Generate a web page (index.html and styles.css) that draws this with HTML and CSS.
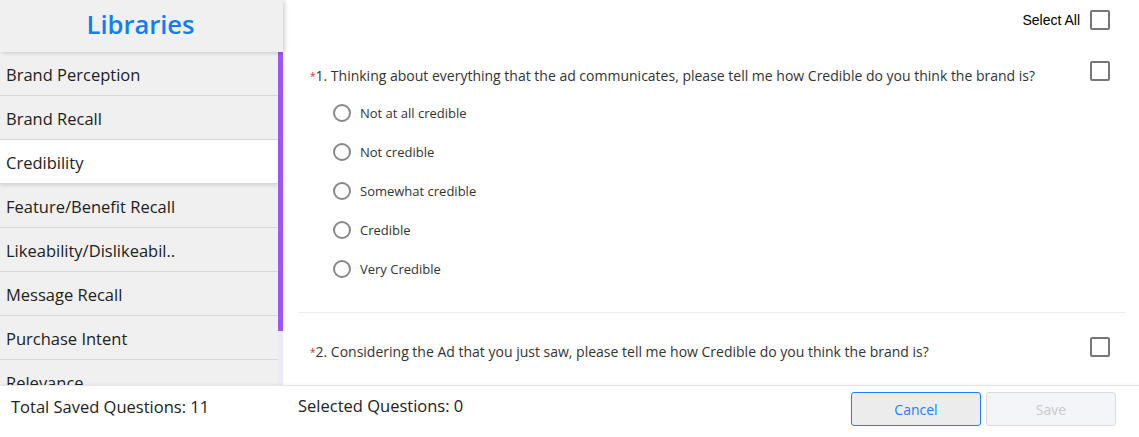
FILE: index.html
```html
<!DOCTYPE html>
<html lang="en">
<head>
    <meta charset="UTF-8">
    <title>Libraries</title>
    <link rel="stylesheet" href="styles.css">
</head>
<body>

<div class="page">
    <div class="top">
        <aside class="sidebar">
            <div class="side-head">Libraries</div>
            <div class="side-body">
                <ul class="lib-list">
                    <li>Brand Perception</li>
                    <li>Brand Recall</li>
                    <li class="active">Credibility</li>
                    <li>Feature/Benefit Recall</li>
                    <li>Likeability/Dislikeabil..</li>
                    <li>Message Recall</li>
                    <li>Purchase Intent</li>
                    <li>Relevance</li>
                </ul>
                <div class="scroll-track"><div class="scroll-thumb"></div></div>
            </div>
        </aside>

        <main class="main">
            <div class="select-all">
                <span>Select All</span>
                <span class="check"></span>
            </div>

            <div class="question">
                <div class="q-head">
                    <p class="q-text"><span class="req">*</span>1. Thinking about everything that the ad communicates, please tell me how Credible do you think the brand is?</p>
                    <span class="check"></span>
                </div>
                <ul class="options">
                    <li><span class="radio"></span>Not at all credible</li>
                    <li><span class="radio"></span>Not credible</li>
                    <li><span class="radio"></span>Somewhat credible</li>
                    <li><span class="radio"></span>Credible</li>
                    <li><span class="radio"></span>Very Credible</li>
                </ul>
            </div>

            <div class="question">
                <div class="q-head">
                    <p class="q-text"><span class="req">*</span>2. Considering the Ad that you just saw, please tell me how Credible do you think the brand is?</p>
                    <span class="check"></span>
                </div>
            </div>
        </main>
    </div>

    <footer class="footer">
        <div class="total">Total Saved Questions: 11</div>
        <div class="selected">Selected Questions: 0</div>
        <div class="actions">
            <button class="btn btn-cancel">Cancel</button>
            <button class="btn btn-save" disabled>Save</button>
        </div>
    </footer>
</div>

</body>
</html>
```

FILE: styles.css
```css
* { box-sizing: border-box; }
html, body { margin: 0; padding: 0; }
body {
    font-family: "Open Sans", "Noto Sans", sans-serif;
    color: #222;
    background: #fff;
    width: 1139px;
    height: 437px;
    overflow: hidden;
}
ul { list-style: none; margin: 0; padding: 0; }
p { margin: 0; }

.page { display: flex; flex-direction: column; height: 437px; }
.top { display: flex; height: 385px; overflow: hidden; }

/* sidebar */
.sidebar {
    width: 283px;
    flex: none;
    display: flex;
    flex-direction: column;
    position: relative;
    z-index: 1;
}
.side-head {
    height: 52px;
    flex: none;
    background-color: #f0f0f0;
    color: #0f7ef6;
    font-size: 25.5px;
    font-weight: 600;
    text-align: center;
    line-height: 48px;
    padding-right: 2px;
    box-shadow: 2px 1px 4px rgba(0, 0, 0, 0.18);
    position: relative;
    z-index: 2;
}
.side-body { flex: 1; display: flex; overflow: hidden; }
.lib-list { width: 278px; background-color: #f0f0f0; }
.lib-list li {
    height: 44px;
    padding-top: 3px;
    line-height: 40px;
    padding-left: 6px;
    font-size: 16.5px;
    color: #222;
    border-bottom: 1px solid #dcd7d7;
    white-space: nowrap;
}
.lib-list li.active {
    background-color: #fff;
    box-shadow: 0 2px 3px rgba(0, 0, 0, 0.1);
    position: relative;
}
.scroll-track { width: 5px; background-color: #eee8fc; }
.scroll-thumb { height: 279px; background-color: #9b56f8; }

/* main */
.main { flex: 1; padding: 0 13px 0 15px; overflow: hidden; }
.select-all {
    height: 39px;
    display: flex;
    align-items: center;
    justify-content: flex-end;
    gap: 10px;
    padding-right: 16px;
    font-family: "Liberation Sans", Arial, sans-serif;
    font-size: 14px;
    color: #000;
}
.check {
    width: 20px;
    height: 20px;
    flex: none;
    border: 2px solid #777;
    border-radius: 2px;
    background: #fff;
}
.question { padding: 22px 16px 24px 12px; }
.question + .question { border-top: 1px solid #ececec; padding-top: 24px; }
.q-head { display: flex; justify-content: space-between; align-items: flex-start; }
.q-text { font-size: 14px; line-height: 20px; margin-top: 5px; color: #333; }
.req { color: #e0282e; font-size: 10px; vertical-align: 1px; }
.options { padding: 7px 0 0 23px; }
.options li {
    height: 39px;
    display: flex;
    align-items: center;
    gap: 9px;
    font-size: 13px;
    color: #333;
}
.radio {
    width: 18px;
    height: 18px;
    border: 2px solid #888;
    border-radius: 50%;
    flex: none;
}

/* footer */
.footer {
    height: 52px;
    display: flex;
    align-items: flex-start;
    border-top: 1px solid #e6e6e6;
    box-shadow: 0 -1px 2px rgba(0, 0, 0, 0.04);
    font-size: 16.5px;
    color: #222;
    position: relative;
    z-index: 3;
    background: #fff;
}
.total { width: 298px; padding-left: 11px; margin-top: 9px; }
.selected { margin-top: 8px; }
.actions { margin-left: auto; display: flex; gap: 5px; padding: 6px 23px 0 0; }
.btn {
    width: 130px;
    height: 34px;
    border-radius: 3px;
    font-family: "Open Sans", sans-serif;
    font-size: 14px;
    cursor: pointer;
}
.btn-cancel { background-color: #ececec; border: 1px solid #1a80f5; color: #1a80f5; }
.btn-save { background-color: #f3f5f8; border: 1px solid #dcdcdc; color: #c8c8c8; }
```
